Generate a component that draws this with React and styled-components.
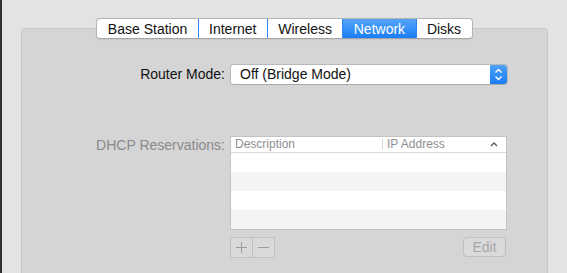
import styled, { createGlobalStyle } from "styled-components";

const GlobalStyle = createGlobalStyle`
  html, body {
    margin: 0;
    padding: 0;
    background: #e3e3e4;
  }
  body {
    font-family: "Liberation Sans", Arial, sans-serif;
    -webkit-font-smoothing: antialiased;
  }
`;

const Window = styled.div`
  box-sizing: border-box;
  width: 567px;
  height: 273px;
  overflow: hidden;
  background: #e3e3e4;
  border-left: 2px solid #2e2e2e;
  padding: 18px 0 0 19px;
`;

const Section = styled.div`
  width: 527px;
  display: flex;
  flex-direction: column;
  align-items: center;
`;

const TabBar = styled.div`
  position: relative;
  z-index: 1;
  display: flex;
  height: 21px;
  margin-bottom: -11px;
  box-sizing: border-box;
  border: 1px solid #b4b4b5;
  border-bottom-color: #a5a5a6;
  border-radius: 4px;
  background: #fff;
  overflow: hidden;
  box-shadow: 0 1px 1px rgba(0, 0, 0, 0.06);
`;

const Tab = styled.div`
  display: flex;
  align-items: center;
  padding: 0 10.4px;
  font-size: 14px;
  color: ${(p) => (p.$active ? "#fff" : "#111")};
  background: ${(p) =>
    p.$active ? "linear-gradient(#55a6fa, #1a7df5)" : "transparent"};

  & + & {
    border-left: 1px solid ${(p) => (p.$active ? "#2e86f2" : "#dadada")};
  }
`;

const Panel = styled.div`
  box-sizing: border-box;
  width: 527px;
  height: 260px;
  background: #d5d5d6;
  border: 1px solid #c7c7c8;
  border-radius: 4px;
  padding: 35px 0 0 0;
`;

const Form = styled.div`
  display: grid;
  grid-template-columns: 203px 278px;
  column-gap: 5px;
  align-items: start;
`;

const Label = styled.div`
  text-align: right;
  font-size: 14px;
  line-height: 21px;
  color: ${(p) => (p.$disabled ? "#8a8a8b" : "#111")};
  margin-top: ${(p) => p.$top || 0}px;
`;

const Select = styled.div`
  display: flex;
  height: 21px;
  box-sizing: border-box;
  border: 1px solid #b9b9ba;
  border-bottom-color: #a9a9aa;
  border-radius: 4px;
  background: #fff;
  overflow: hidden;
`;

const SelectText = styled.div`
  flex: 1;
  padding-left: 9px;
  font-size: 14px;
  line-height: 19px;
  color: #111;
`;

const Stepper = styled.div`
  width: 17px;
  display: flex;
  align-items: center;
  justify-content: center;
  background: linear-gradient(#4ea2fa, #1a7cf5);
`;

const TableBlock = styled.div`
  grid-column: 2;
  margin-top: 51px;
  width: 277px;
`;

const Table = styled.div`
  box-sizing: border-box;
  border: 1px solid #c3c3c4;
  background: #fff;
`;

const HeaderRow = styled.div`
  display: flex;
  align-items: center;
  height: 15px;
  border-bottom: 1px solid #d9d9d9;
  font-size: 12px;
  color: #8e8e8f;
`;

const HeaderCell = styled.div`
  display: flex;
  align-items: center;
  justify-content: space-between;
  width: ${(p) => p.$width}px;
  flex: ${(p) => (p.$width ? "none" : 1)};
  padding: 0 ${(p) => (p.$width ? 0 : 8)}px 0 4px;
  box-sizing: border-box;
  height: 11px;
  line-height: 11px;

  & + & {
    border-left: 1px solid #d6d6d6;
  }
`;

const Row = styled.div`
  height: 19px;
  background: ${(p) => (p.$alt ? "#f4f4f4" : "#fff")};
`;

const Buttons = styled.div`
  display: flex;
  justify-content: space-between;
  margin-top: 7px;
`;

const Segmented = styled.div`
  display: flex;
  border: 1px solid #c2c2c3;
  background: #d9d9da;
`;

const SegButton = styled.div`
  width: 21px;
  height: 19px;
  display: flex;
  align-items: center;
  justify-content: center;

  & + & {
    border-left: 1px solid #c2c2c3;
  }
`;

const EditButton = styled.div`
  box-sizing: border-box;
  width: 43px;
  height: 20px;
  margin-right: 1px;
  border: 1px solid #c0c0c1;
  border-radius: 4px;
  background: #dadadb;
  font-size: 14px;
  line-height: 18px;
  text-align: center;
  color: #a7a7a8;
`;

const tabs = ["Base Station", "Internet", "Wireless", "Network", "Disks"];

export default function App() {
  return (
    <>
      <GlobalStyle />
      <Window>
        <Section>
          <TabBar>
            {tabs.map((t) => (
              <Tab key={t} $active={t === "Network"}>
                {t}
              </Tab>
            ))}
          </TabBar>
          <Panel>
            <Form>
              <Label>Router Mode:</Label>
              <Select>
                <SelectText>Off (Bridge Mode)</SelectText>
                <Stepper>
                  <svg width="9" height="13" viewBox="0 0 9 13">
                    <path
                      d="M1.5 4.5 L4.5 1.5 L7.5 4.5 M1.5 8.5 L4.5 11.5 L7.5 8.5"
                      fill="none"
                      stroke="#fff"
                      strokeWidth="1.4"
                    />
                  </svg>
                </Stepper>
              </Select>
              <Label $disabled $top={50}>
                DHCP Reservations:
              </Label>
              <TableBlock>
                <Table>
                  <HeaderRow>
                    <HeaderCell $width={151}>Description</HeaderCell>
                    <HeaderCell>
                      IP Address
                      <svg width="8" height="5" viewBox="0 0 8 5">
                        <path
                          d="M1 4 L4 1 L7 4"
                          fill="none"
                          stroke="#555"
                          strokeWidth="1.3"
                        />
                      </svg>
                    </HeaderCell>
                  </HeaderRow>
                  <Row />
                  <Row $alt />
                  <Row />
                  <Row $alt />
                </Table>
                <Buttons>
                  <Segmented>
                    <SegButton>
                      <svg width="11" height="11" viewBox="0 0 11 11">
                        <path d="M5.5 0 V11 M0 5.5 H11" stroke="#9b9b9c" strokeWidth="1" />
                      </svg>
                    </SegButton>
                    <SegButton>
                      <svg width="11" height="11" viewBox="0 0 11 11">
                        <path d="M0 5.5 H11" stroke="#9b9b9c" strokeWidth="1" />
                      </svg>
                    </SegButton>
                  </Segmented>
                  <EditButton>Edit</EditButton>
                </Buttons>
              </TableBlock>
            </Form>
          </Panel>
        </Section>
      </Window>
    </>
  );
}
